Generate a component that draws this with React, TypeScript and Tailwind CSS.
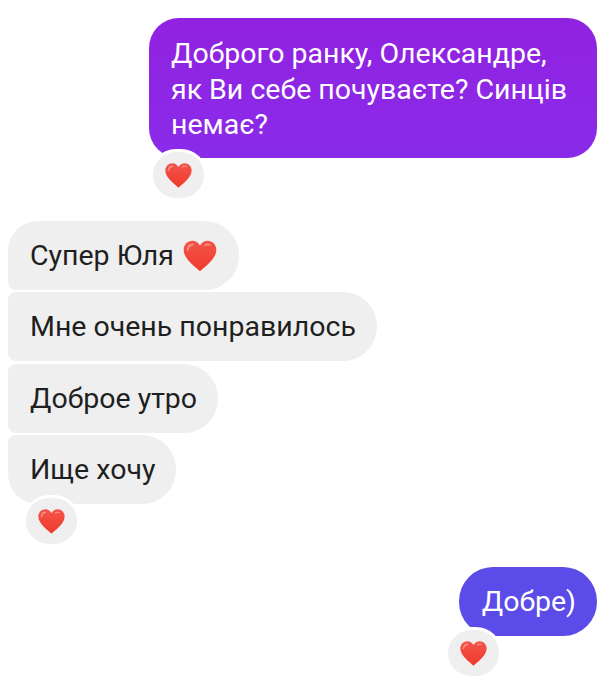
const Heart = ({ size = 29 }: { size?: number }) => (
  <svg width={size} height={size} viewBox="0 0 32 32" className="shrink-0">
    <defs>
      <linearGradient id="hg" x1="0" y1="0" x2="0" y2="1">
        <stop offset="0" stopColor="#f4544a" />
        <stop offset="1" stopColor="#ee3a2b" />
      </linearGradient>
    </defs>
    <path d="M16 29.5C12 25.8 1.5 18.6 1.5 10.6 1.5 5.9 5 2.5 9.2 2.5c2.9 0 5.3 1.5 6.8 4.2 1.5-2.7 3.9-4.2 6.8-4.2 4.2 0 7.7 3.4 7.7 8.1 0 8-10.5 15.2-14.5 18.9z" fill="url(#hg)" />
    <path d="M5 10.5c.2-2.4 2-4.4 4.3-4.6" fill="none" stroke="#fb8f86" strokeWidth="1.8" strokeLinecap="round" />
    <path d="M20.5 6.5c1.2-.9 3-1 4.2-.4" fill="none" stroke="#fb8f86" strokeWidth="1.5" strokeLinecap="round" />
  </svg>
);

const Reaction = ({ className }: { className: string }) => (
  <div className={`flex h-[52px] w-[57px] items-center justify-center rounded-full border-[3px] border-white bg-[#efefef] pt-[1px] ${className}`}>
    <Heart />
  </div>
);

const Left = ({ children, corners }: { children: React.ReactNode; corners: string }) => (
  <div className={`flex h-[69px] w-fit items-center gap-[8px] bg-[#efefef] pl-[22px] pr-[21px] text-[#1f1f1f] ${corners}`}>
    {children}
  </div>
);

export default function App() {
  return (
    <div className="flex h-[699px] w-[611px] flex-col overflow-hidden bg-white pt-[18px] text-[28.5px] leading-[35.5px] [font-family:Roboto,sans-serif]">
      <div className="mr-[14px] flex justify-end">
        <div className="h-[140px] w-[448px] rounded-[30px] bg-gradient-to-b from-[#9121e0] to-[#8a2bea] pl-[22px] pt-[18px] text-white">
          Доброго ранку, Олександре,
          <br />
          як Ви себе почуваєте? Синців
          <br />
          немає?
        </div>
      </div>
      <Reaction className="relative z-10 ml-[150px] mt-[-9px]" />

      <div className="mt-[20px] ml-[8px] flex flex-col gap-[2.4px]">
        <Left corners="rounded-l-[8px] rounded-r-[34px] rounded-tl-[30px]">
          Супер Юля <Heart size={36} />
        </Left>
        <Left corners="rounded-l-[8px] rounded-r-[34px]">Мне очень понравилось</Left>
        <Left corners="rounded-l-[8px] rounded-r-[34px]">Доброе утро</Left>
        <Left corners="rounded-l-[8px] rounded-r-[34px] rounded-bl-[30px]">Ище хочу</Left>
      </div>
      <Reaction className="relative z-10 ml-[23px] mt-[-9px]" />

      <div className="mr-[14px] mt-[20px] flex justify-end">
        <div className="flex h-[69px] items-center rounded-[34px] bg-[#5b4be8] pl-[23px] pr-[21px] text-white">Добре)</div>
      </div>
      <Reaction className="relative z-10 ml-[445px] mt-[-9px]" />
    </div>
  );
}
